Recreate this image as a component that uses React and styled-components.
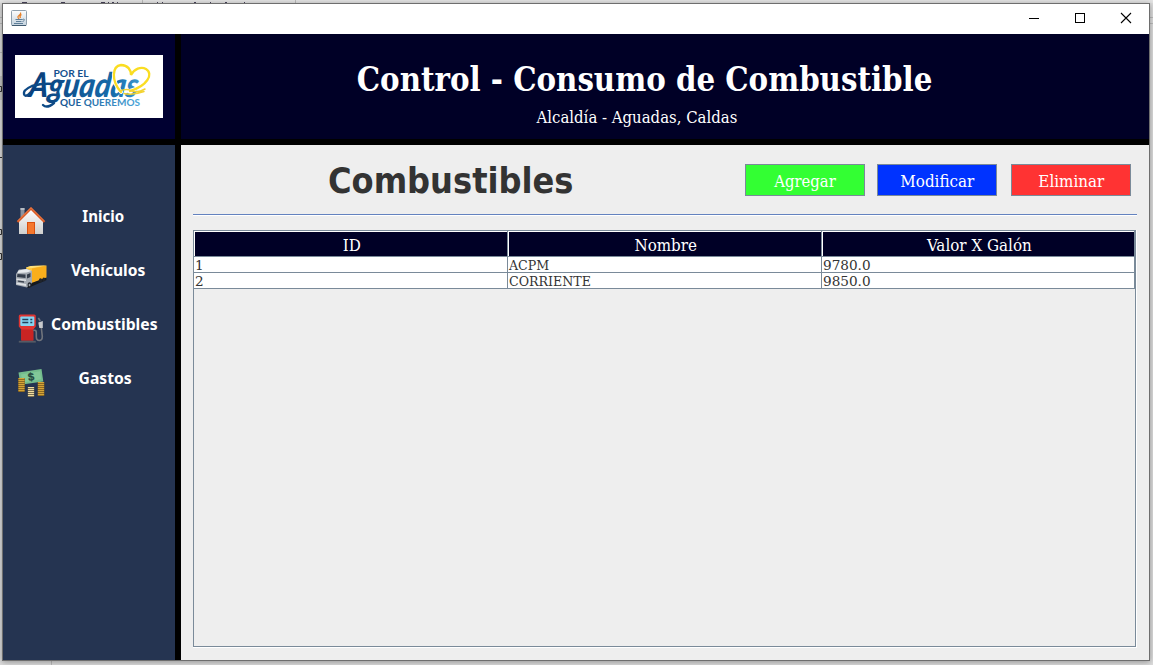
import React from "react";
import styled, { createGlobalStyle } from "styled-components";

const serif = `"DejaVu Serif Condensed", "DejaVu Serif", serif`;

const GlobalStyle = createGlobalStyle`
  * { box-sizing: border-box; }
  body { margin: 0; overflow: hidden; background: #dedede; }
`;

const Desktop = styled.div`
  position: relative;
  width: 1153px;
  height: 665px;
  padding: 3px 3px 4px 2px;
  background: #dcdcdc;
  overflow: hidden;
`;

const Behind = styled.svg`
  position: absolute;
  inset: 0;
`;

const Window = styled.div`
  position: relative;
  display: grid;
  grid-template-rows: 30px 626px;
  width: 1148px;
  height: 658px;
  border: 1px solid #6e6e6e;
  box-shadow: 0 1px 6px rgba(0, 0, 0, 0.35);
  background: #000;
`;

const TitleBar = styled.div`
  display: flex;
  align-items: center;
  justify-content: space-between;
  background: #fff;
  padding: 0 17px 2px 8px;
`;

const Controls = styled.div`
  display: flex;
  gap: 34px;
  margin-top: -1px;
`;

const Frame = styled.div`
  display: grid;
  grid-template-columns: 172px 968px;
  grid-template-rows: 105px 515px;
  gap: 6px;
`;

const LogoPanel = styled.div`
  background: #000031;
  padding: 21px 12px;
`;

const Logo = styled.svg`
  display: block;
  width: 148px;
  height: 63px;
  background: #fff;
`;

const Header = styled.header`
  background: #000026;
  color: #fff;
  font-family: ${serif};
  font-stretch: condensed;
  display: flex;
  flex-direction: column;
  align-items: center;
`;

const Fit = styled.span`
  display: inline-block;
  white-space: nowrap;
  transform: scaleX(${(p) => p.$x || 1});
`;

const AppTitle = styled.h1`
  margin: 25px 41px 0 0;
  font-size: 33px;
  line-height: 42px;
  font-weight: bold;
`;

const Subtitle = styled.div`
  margin: 6px 57px 0 0;
  font-size: 16.5px;
  line-height: 22px;
`;

const Sidebar = styled.nav`
  background: #253451;
  padding-top: 53px;
`;

const NavItem = styled.a`
  display: grid;
  grid-template-columns: 32px 1fr;
  height: 54px;
  padding-left: 12px;
  color: #fff;
  font: bold 16px/24px "Noto Sans", "Open Sans", sans-serif;
`;

const NavIcon = styled.svg`
  width: 32px;
  height: 32px;
  margin-top: 7px;
`;

const NavLabel = styled.span`
  width: ${(p) => p.$w}px;
  text-align: center;
  margin-top: 6px;
  display: flex;
  justify-content: center;
`;

const Main = styled.main`
  background: #eee;
  padding: 0 12px;
  font-family: ${serif};
  font-stretch: condensed;
`;

const Toolbar = styled.div`
  display: flex;
  height: 69px;
  padding-top: 19px;
`;

const PageTitle = styled.h2`
  flex: 0 0 552px;
  display: flex;
  justify-content: center;
  margin: -6px 0 0;
  padding-right: 37px;
  font: bold 36px/46px "DejaVu Sans", sans-serif;
  font-stretch: condensed;
  color: #333;
`;

const Button = styled.button`
  width: 120px;
  height: 32px;
  padding: 2px 0 0;
  margin-right: ${(p) => p.$gap || 0}px;
  border: 1px solid #7a8a99;
  background: ${(p) => p.$color};
  color: #fff;
  font-family: ${serif};
  font-stretch: condensed;
  font-size: 16.5px;
`;

const Separator = styled.div`
  width: 944px;
  height: 2px;
  background: #fff;
  border-top: 1px solid #6382bf;
`;

const ScrollPane = styled.div`
  width: 944px;
  height: 418px;
  margin-top: 14px;
  border-right: 1px solid #fff;
  border-bottom: 1px solid #fff;
`;

const Viewport = styled.div`
  height: 417px;
  border: 1px solid #7a8a99;
`;

const Row = styled.div`
  display: grid;
  grid-template-columns: 314px 314px 313px;
`;

const HeadCell = styled.div`
  height: 26px;
  padding-left: 2px;
  border: solid #7a8a99;
  border-width: 0 1px 1px 0;
  background: #000026;
  box-shadow: inset 1px 1px #fff;
  color: #fff;
  font-size: 16.5px;
  line-height: 29px;
  text-align: center;
`;

const Cell = styled.div`
  height: 16px;
  padding-left: 1px;
  border: solid #7a8a99;
  border-width: 0 1px 1px 0;
  background: #fff;
  color: #333;
  font-size: 13.5px;
  line-height: 16px;

  ${Fit} { transform-origin: left; }
`;

const JavaIcon = () => (
  <svg width="16" height="16" viewBox="0 0 16 16">
    <defs>
      <linearGradient id="jv" x2="0" y2="1">
        <stop stopColor="#fdfdfd" /><stop offset="1" stopColor="#c3d2de" />
      </linearGradient>
    </defs>
    <rect x=".5" y=".5" width="15" height="15" rx="1" fill="url(#jv)" stroke="#8fa0ae" />
    <path d="M1 15.500h14" stroke="#3f5a70" />
    <path d="M9.500 2.500C11 5 6 5.500 7 7.500L8 9M10.500 4.500C8 6 9 7 9.500 8" fill="none" stroke="#e8822a" strokeWidth="1.300" />
    <path d="M4.500 9.500h7M5 11.500h5.500M3 13.500h9M11.500 9.500c2.500-1.300 2.500 1.500 0 2" fill="none" stroke="#5f7f99" />
  </svg>
);

const WindowControls = () => (
  <Controls>
    <svg width="12" height="12"><path d="M1 6.500h10" stroke="#000" /></svg>
    <svg width="12" height="12"><rect x="1.500" y="1.500" width="9" height="9" fill="none" stroke="#000" /></svg>
    <svg width="12" height="12"><path d="M1 1l10 10M11 1l-10 10" stroke="#000" strokeWidth="1.100" /></svg>
  </Controls>
);

const House = () => (
  <>
    <defs><linearGradient id="wall" x2="0" y2="1"><stop stopColor="#fff" /><stop offset="1" stopColor="#cfcfcd" /></linearGradient></defs>
    <path d="M5.500 3h4v9h-4z" fill="#8b939f" />
    <path d="M5.500 3h4v2h-4z" fill="#b7bcc4" />
    <path d="M4 16L16 4l12 12v13H4z" fill="url(#wall)" />
    <path d="M12 17h8v12h-8z" fill="#d9500f" />
    <path d="M13 18h6v11h-6z" fill="#f5782e" />
    <path d="M2.500 17L16 3.500l13.500 13.500" fill="none" stroke="#d95a25" strokeWidth="2.200" />
    <path d="M3 15.600L16 2.600l13 13" fill="none" stroke="#f28a55" strokeWidth=".8" />
  </>
);

const Truck = () => (
  <g transform="translate(0 1)">
    <defs><linearGradient id="cargo" x2="1" y2="1"><stop stopColor="#ffd34e" /><stop offset="1" stopColor="#f59a0b" /></linearGradient></defs>
    <path d="M10 25L31 17l.5 3L13 28z" fill="#15191f" />
    <path d="M11 7.500l5-1.500 15.500-.5v12l-16.500 6z" fill="url(#cargo)" />
    <path d="M11 7.500l5-1.500 15.500-.5-14.500 2.500z" fill="#ffe07b" />
    <path d="M17 8.500L31 6v11l-14 5z" fill="#f9ae1c" />
    <path d="M1 14l3-4.500 8-.5 5 2v12l-5 4.500-11-2.500z" fill="#a3a9b1" />
    <path d="M3.500 10.500l8-1.500 5 2-5 1.500-9 .5z" fill="#e8ebee" />
    <path d="M2.500 14l8 .5v3.500l-8.500-1zM12 14.500l3.500-1.500v4l-3.500 1.500z" fill="#343d4b" />
    <path d="M1.500 18.500l9.500 1v1.500l-9.500-1zM1.500 22.500l9.500 1.500v2l-9.500-1.800z" fill="#dfe2e5" />
    <path d="M3 20.500l6 .8v1.500l-6-1z" fill="#3d4450" />
    <ellipse cx="14.500" cy="25" rx="1.900" ry="2.800" fill="#20242b" />
    <ellipse cx="14.500" cy="25" rx=".8" ry="1.300" fill="#9da3ab" />
    <ellipse cx="25.500" cy="20.500" rx="1.600" ry="2.200" fill="#20242b" />
    <ellipse cx="28.800" cy="19.500" rx="1.400" ry="2" fill="#20242b" />
  </g>
);

const Pump = () => (
  <g transform="translate(-.7 -.5)">
    <path d="M4.500 3.500Q4.500 2 6 2h14Q21.500 2 21.500 3.500V14l-2.500 3v11H7V17l-2.500-3z" fill="#e03431" />
    <path d="M7 17h12v11H7z" fill="#c92423" />
    <path d="M4.500 28.300h17v1.800h-17z" fill="#555b66" />
    <rect x="6" y="4" width="14" height="9.500" rx="1" fill="#85d4f1" />
    <path d="M8 7h6M8 10h6M16 7h2M16 10h2" stroke="#24405c" strokeWidth="1.300" />
    <path d="M19 18q3-1 3 2v4q0 4 3 4t3-4l-1-9" fill="none" stroke="#70747c" strokeWidth="1.600" />
    <path d="M24 5.500l2 3" fill="none" stroke="#717680" strokeWidth="1.600" />
    <path d="M24 10l4.500-1.500v7h-3.500z" fill="#c7c9cc" />
  </g>
);

const Coins = ({ x, y, n, w = 6, color = "#d5a437", dark = "#77571c" }) =>
  Array.from({ length: n }, (_, i) => (
    <g key={i}>
      <rect x={x} y={y + i * 2} width={w} height="2" rx=".8" fill={dark} />
      <rect x={x + 0.3} y={y + i * 2} width={w - 0.6} height="1.200" rx=".6" fill={color} />
    </g>
  ));

const Money = () => (
  <>
    <path d="M3.500 5.500L26.500 2l1.800 12.500L7 17.500 4.500 12z" fill="#74bd8d" />
    <path d="M6 7.500l19-3.300 1 8L8 15.500z" fill="#82c998" />
    <text x="16" y="13.500" textAnchor="middle" fontFamily="Liberation Sans" fontSize="11" fill="#23483f" stroke="#23483f" strokeWidth=".3" transform="rotate(-8 16 10)">$</text>
    <Coins x={3} y={11} n={7} w={7} />
    <Coins x={22.500} y={15} n={7} w={7} />
    <Coins x={12.500} y={20} n={5} w={7} color="#f1dda0" dark="#554d3b" />
  </>
);

const CityLogo = () => (
  <Logo viewBox="0 0 148 63">
    <defs>
      <linearGradient id="script" gradientUnits="userSpaceOnUse" x1="8" x2="126" y1="0" y2="0">
        <stop stopColor="#0a417e" /><stop offset=".65" stopColor="#176cab" /><stop offset="1" stopColor="#55b4e5" />
      </linearGradient>
      <linearGradient id="tagline" gradientUnits="userSpaceOnUse" x1="45" x2="125" y1="0" y2="0">
        <stop stopColor="#14508e" /><stop offset="1" stopColor="#4ba6da" />
      </linearGradient>
    </defs>
    <g fontFamily="Lato, sans-serif">
      <text x="38.500" y="22" fontSize="9.500" fontWeight="bold" textLength="35" lengthAdjust="spacingAndGlyphs" fill="#14508e">POR EL</text>
      <text transform="translate(13 42) skewX(-8)" fontSize="34" fontWeight="900" fontStyle="italic" textLength="109" lengthAdjust="spacingAndGlyphs" fill="url(#script)">Aguadas</text>
      <text x="45" y="50.800" fontSize="9.500" fontWeight="bold" textLength="80" lengthAdjust="spacingAndGlyphs" fill="url(#tagline)">QUE QUEREMOS</text>
    </g>
    <path d="M15 38Q10 43 9 39T17 31Q28 28 38 29M28 50q4 4 11-2" fill="none" stroke="#0d4985" strokeWidth="2.400" strokeLinecap="round" />
    <path d="M106 37C96 26 97 11 106 10c7 0 10 5 10 10 3-6 10-9 15-6 8 5 1 17-16 22" fill="none" stroke="#fff" strokeWidth="4" strokeLinecap="round" />
    <path d="M106 37C96 26 97 11 106 10c7 0 10 5 10 10 3-6 10-9 15-6 8 5 1 17-16 22" fill="none" stroke="#fadd22" strokeWidth="2.300" strokeLinecap="round" />
    <path d="M105 36q7-3 12 0 6 2 13-2M109 38.500q9 2 20-2" fill="none" stroke="#f3d331" strokeWidth="1.500" strokeLinecap="round" />
  </Logo>
);

const nav = [
  { label: "Inicio", icon: <House />, w: 113, x: 0.94 },
  { label: "Vehículos", icon: <Truck />, w: 122, x: 0.975 },
  { label: "Combustibles", icon: <Pump />, w: 114, x: 0.98 },
  { label: "Gastos", icon: <Money />, w: 117, x: 0.98 },
];

const rows = [
  ["1", "ACPM", "9780.0"],
  ["2", "CORRIENTE", "9850.0"],
];

export default function App() {
  return (
    <Desktop>
      <GlobalStyle />
      <Behind width="1153" height="665">
        <path d="M0 0h1153v3H0z" fill="#e4e4e4" />
        <path d="M142.500 0v3M295.500 0v3M0 17.500h2M0 23.500h2M0 52.500h2M1150 17.500h3M1150 23.500h3M51.500 661v4" stroke="#bbb" />
        <path d="M22 2.500h5M61 2.500h4M101 2.500h4M108 2.500h1M112 2.500h2M117 2.500h1M157 2.500h1M162 2.500h1M194 2.500h2M210 2.500h1M225 2.500h2M244 2.500h1" stroke="#49445c" />
        <path d="M0 76h2v24H0z" fill="#c4c4c4" />
        <path d="M0 86.500h1.500v5H0M0 229.500h1.500v5H0M0 253.500h1.500v6H0M0 157.500h2" stroke="#333" fill="none" />
      </Behind>
      <Window>
        <TitleBar>
          <JavaIcon />
          <WindowControls />
        </TitleBar>
        <Frame>
          <LogoPanel><CityLogo /></LogoPanel>
          <Header>
            <AppTitle><Fit $x={0.987}>Control - Consumo de Combustible</Fit></AppTitle>
            <Subtitle><Fit $x={1.005}>Alcaldía - Aguadas, Caldas</Fit></Subtitle>
          </Header>
          <Sidebar>
            {nav.map((n) => (
              <NavItem key={n.label}>
                <NavIcon viewBox="0 0 32 32">{n.icon}</NavIcon>
                <NavLabel $w={n.w}><Fit $x={n.x}>{n.label}</Fit></NavLabel>
              </NavItem>
            ))}
          </Sidebar>
          <Main>
            <Toolbar>
              <PageTitle><Fit $x={0.992}>Combustibles</Fit></PageTitle>
              <Button $color="#33ff33" $gap={12}><Fit $x={1}>Agregar</Fit></Button>
              <Button $color="#0033ff" $gap={14}><Fit $x={1.02}>Modificar</Fit></Button>
              <Button $color="#ff3333"><Fit $x={1.02}>Eliminar</Fit></Button>
            </Toolbar>
            <Separator />
            <ScrollPane>
              <Viewport>
                <Row>
                  {["ID", "Nombre", "Valor X Galón"].map((h) => (
                    <HeadCell key={h}><Fit $x={1.02}>{h}</Fit></HeadCell>
                  ))}
                </Row>
                {rows.map((r) => (
                  <Row key={r[0]}>
                    {r.map((c) => <Cell key={c}><Fit $x={/^\d/.test(c) ? 1.12 : 1.04}>{c}</Fit></Cell>)}
                  </Row>
                ))}
              </Viewport>
            </ScrollPane>
          </Main>
        </Frame>
      </Window>
    </Desktop>
  );
}
